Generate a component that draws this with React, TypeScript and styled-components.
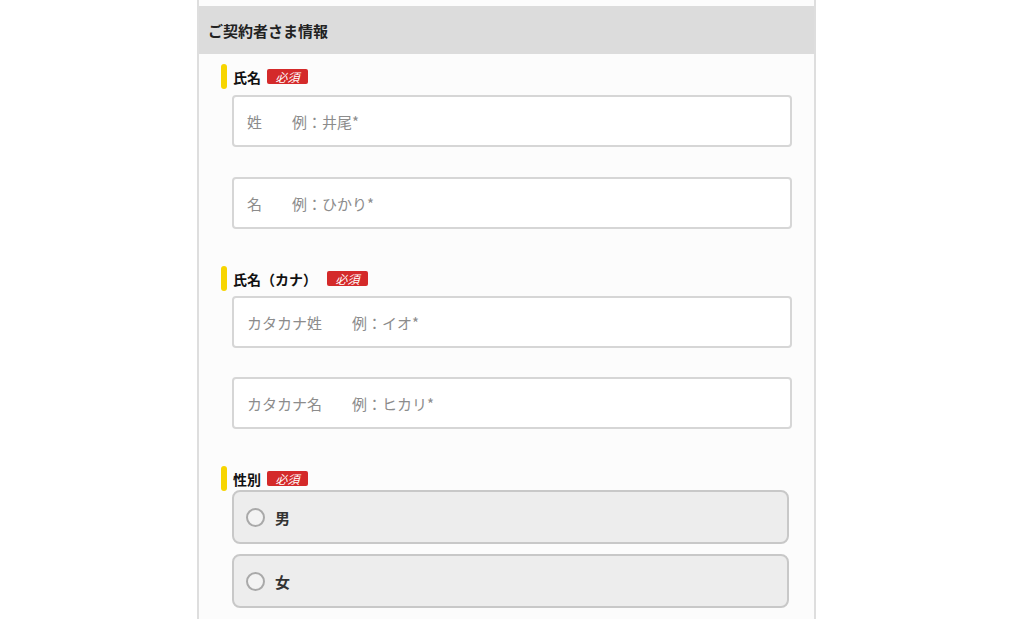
import styled, { createGlobalStyle } from "styled-components";

const GlobalStyle = createGlobalStyle`
	html, body {
		margin: 0;
		padding: 0;
		background-color: #fff;
		font-family: "Noto Sans CJK JP", "Noto Sans", sans-serif;
		color: #222;
	}
	* {
		box-sizing: border-box;
	}
`;

const Panel = styled.div`
	width: 619px;
	min-height: 100vh;
	margin-left: 197px;
	padding-top: 6px;
	border-left: 2px solid #dedede;
	border-right: 2px solid #dedede;
	background-color: #fcfcfc;
`;

const PanelHeader = styled.h2`
	display: flex;
	align-items: center;
	height: 48px;
	margin: 0;
	padding-left: 9px;
	background-color: #dcdcdc;
	font-size: 15px;
	font-weight: 700;
	color: #222;
`;

const PanelBody = styled.div`
	display: flex;
	flex-direction: column;
	gap: 37px;
	padding: 10px 22px 0 22px;
`;

const Field = styled.section`
	display: flex;
	flex-direction: column;
`;

const FieldLabel = styled.div`
	display: flex;
	align-items: center;
	height: 25px;
	font-size: 14px;
	font-weight: 700;
	color: #111;

	.bar {
		width: 6px;
		height: 25px;
		margin-right: 6px;
		border-radius: 3px;
		background-color: #f7d500;
	}
`;

const Badge = styled.span<{ $offset?: number }>`
	display: inline-flex;
	align-items: center;
	justify-content: center;
	width: 41px;
	height: 15px;
	margin-left: ${({ $offset }) => $offset ?? 6}px;
	border-radius: 2px;
	background-color: #d42a2a;
	color: #fff;
	font-size: 12px;
	font-style: italic;
	font-weight: 400;
	line-height: 1;
`;

const FieldControls = styled.div<{ $top: number; $gap: number }>`
	display: flex;
	flex-direction: column;
	gap: ${({ $gap }) => $gap}px;
	margin-top: ${({ $top }) => $top}px;
	padding-left: 11px;
`;

const TextInput = styled.input`
	width: 100%;
	height: 52px;
	padding: 0 13px;
	border: 2px solid #d6d6d6;
	border-radius: 4px;
	background-color: #fff;
	font-family: "Noto Sans CJK JP", "Noto Sans", sans-serif;
	font-size: 15px;
	color: #333;
	outline: none;

	&::placeholder {
		color: #8c8c8c;
	}
`;

const RadioOption = styled.label`
	display: flex;
	align-items: center;
	width: 557px;
	height: 54px;
	padding-left: 12px;
	border: 2px solid #c8c8c8;
	border-radius: 8px;
	background-color: #ededed;
	cursor: pointer;

	input {
		display: none;
	}

	.circle {
		width: 19px;
		height: 19px;
		margin-right: 10px;
		border: 2px solid #a9a9a9;
		border-radius: 50%;
		background-color: #f3f3f3;
	}

	.text {
		font-size: 15px;
		font-weight: 700;
		color: #333;
	}
`;

const App = (): JSX.Element => {
	return (
		<>
			<GlobalStyle />
			<Panel>
				<PanelHeader>ご契約者さま情報</PanelHeader>
				<PanelBody>
					<Field>
						<FieldLabel>
							<span className="bar" />
							氏名
							<Badge>必須</Badge>
						</FieldLabel>
						<FieldControls $top={6} $gap={30}>
							<TextInput placeholder="姓　　例：井尾*" />
							<TextInput placeholder="名　　例：ひかり*" />
						</FieldControls>
					</Field>
					<Field>
						<FieldLabel>
							<span className="bar" />
							氏名（カナ）
							<Badge $offset={10}>必須</Badge>
						</FieldLabel>
						<FieldControls $top={5} $gap={29}>
							<TextInput placeholder="カタカナ姓　　例：イオ*" />
							<TextInput placeholder="カタカナ名　　例：ヒカリ*" />
						</FieldControls>
					</Field>
					<Field>
						<FieldLabel>
							<span className="bar" />
							性別
							<Badge>必須</Badge>
						</FieldLabel>
						<FieldControls $top={-1} $gap={10}>
							<RadioOption>
								<input type="radio" name="gender" value="male" />
								<span className="circle" />
								<span className="text">男</span>
							</RadioOption>
							<RadioOption>
								<input type="radio" name="gender" value="female" />
								<span className="circle" />
								<span className="text">女</span>
							</RadioOption>
						</FieldControls>
					</Field>
				</PanelBody>
			</Panel>
		</>
	);
};

export default App;
